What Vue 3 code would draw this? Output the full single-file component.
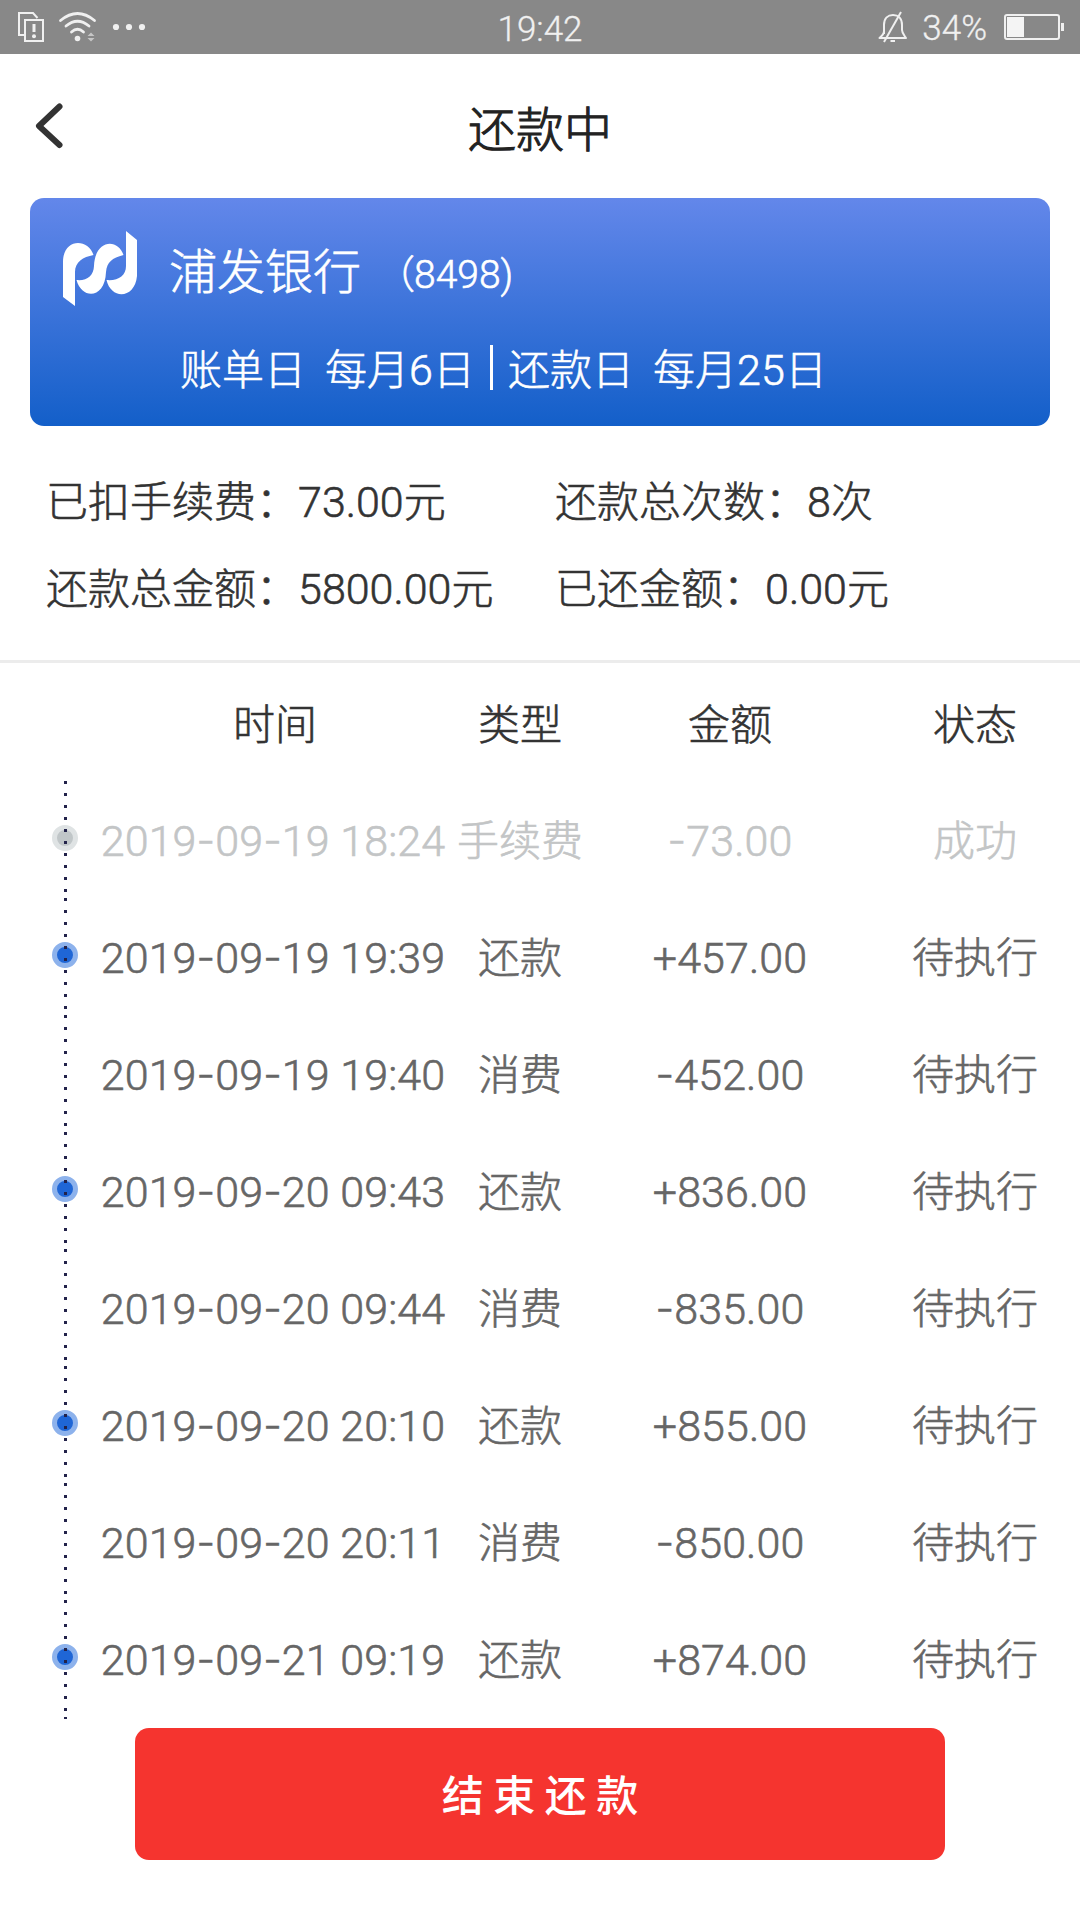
<template>
  <div class="page">
    <div class="status-bar">
      <svg class="status-left" width="160" height="54" viewBox="0 0 160 54" fill="none" stroke="#f0f0f0">
        <path d="M24 35H19V13H33L37.5 18" stroke-width="2" />
        <rect x="25" y="20" width="18" height="21" stroke-width="2" />
        <path d="M34 24V32" stroke-width="3" />
        <circle cx="34" cy="36.2" r="2" fill="#f0f0f0" stroke="none" />
        <g stroke-width="2.8" stroke-linecap="round">
          <path d="M60.5 20.5Q77.5 6.5 94.5 20.5" />
          <path d="M66 26Q77.5 16.5 89 26" />
          <path d="M71.5 32Q77.5 26.5 83.5 32" />
        </g>
        <g fill="#f0f0f0" stroke="none">
          <circle cx="77.5" cy="38.5" r="2.8" />
          <path d="M87.5 36L91 32.5L94.5 36ZM87.5 38L91 41.5L94.5 38Z" opacity="0.6" />
          <circle cx="116" cy="27" r="3.1" />
          <circle cx="129" cy="27" r="3.1" />
          <circle cx="142" cy="27" r="3.1" />
        </g>
      </svg>
      <div class="status-time">19:42</div>
      <div class="status-right">
        <svg width="32" height="34" viewBox="0 0 32 34" fill="none" stroke="#f0f0f0" stroke-width="2">
          <path d="M7 24V15C7 8 11 5 16 5C21 5 25 8 25 15V20C25 23 27 25 29 28H2.5C5 26 7 24 7 21" stroke-linejoin="round" />
          <path d="M24 2L7 32" />
          <path d="M13.5 31H18" />
        </svg>
        <span class="percent">34%</span>
        <svg width="62" height="28" viewBox="0 0 62 28">
          <rect x="2" y="2" width="54" height="24" rx="2" fill="none" stroke="#f0f0f0" stroke-width="2" />
          <rect x="4" y="4" width="17" height="20" fill="#f4f4f4" />
          <rect x="58" y="10" width="3" height="8" fill="#f0f0f0" />
        </svg>
      </div>
    </div>

    <div class="nav">
      <svg class="back" width="32" height="48" viewBox="0 0 32 48">
        <path d="M25.500 4.500L5 24L25.500 43" fill="none" stroke="#333" stroke-width="6" stroke-linecap="round" stroke-linejoin="round" />
      </svg>
      <div class="title">还款中</div>
    </div>

    <div class="bank-card">
      <div class="bank-head">
        <svg class="bank-logo" width="76" height="78" viewBox="62 230 76 78" fill="#fff">
          <path d="M63 262C63 238 88 238 93.500 255C83 257 75 262 75 272V306L63 297Z" />
          <path d="M76.500 280C87 281 93.500 276 94 266C95 239 118 238 123.500 255C112 258 107 262 106 272C105 299 82 300 76.500 280Z" />
          <path d="M106.500 280C118 281 126 276 126 266V231L137 240V276C135 299 111 300 106.500 280Z" />
        </svg>
        <span class="bank-name">{{ card.bank }}</span>
        <span class="bank-no">（<span class="tail">{{ card.tail }})</span></span>
      </div>
      <div class="bank-days">
        <span>账单日</span>
        <span>每月<span class="num">{{ card.billDay }}</span>日</span>
        <i class="bar"></i>
        <span>还款日</span>
        <span>每月<span class="num">{{ card.repayDay }}</span>日</span>
      </div>
    </div>

    <div class="summary">
      <div v-for="s in summary" :key="s.label">
        {{ s.label }}<span class="colon">：</span><span class="num">{{ s.value }}</span>{{ s.unit }}
      </div>
    </div>

    <div class="grid-row table-head">
      <div class="time">时间</div>
      <div>类型</div>
      <div>金额</div>
      <div class="state">状态</div>
    </div>

    <div class="list">
      <div v-for="r in records" :key="r.time" class="grid-row record" :class="{ done: r.done }">
        <i v-if="r.node" class="node"></i>
        <div class="num"><template v-for="(p, i) in r.time.split('-')" :key="i"><span v-if="i" class="dash">-</span>{{ p }}</template></div>
        <div>{{ r.type }}</div>
        <div class="num"><span v-if="r.amount < 0" class="dash">-</span><template v-else>+</template>{{ Math.abs(r.amount).toFixed(2) }}</div>
        <div class="state">{{ r.done ? '成功' : '待执行' }}</div>
      </div>
      <div class="list-rest"></div>
    </div>

    <button class="stop-btn">结 束 还 款</button>
  </div>
</template>

<script setup>
const card = { bank: '浦发银行', tail: '8498', billDay: 6, repayDay: 25 }

const summary = [
  { label: '已扣手续费', value: '73.00', unit: '元' },
  { label: '还款总次数', value: '8', unit: '次' },
  { label: '还款总金额', value: '5800.00', unit: '元' },
  { label: '已还金额', value: '0.00', unit: '元' }
]

// node: the row gets a marker on the timeline
const records = [
  { time: '2019-09-19 18:24', type: '手续费', amount: -73, node: true, done: true },
  { time: '2019-09-19 19:39', type: '还款', amount: 457, node: true },
  { time: '2019-09-19 19:40', type: '消费', amount: -452 },
  { time: '2019-09-20 09:43', type: '还款', amount: 836, node: true },
  { time: '2019-09-20 09:44', type: '消费', amount: -835 },
  { time: '2019-09-20 20:10', type: '还款', amount: 855, node: true },
  { time: '2019-09-20 20:11', type: '消费', amount: -850 },
  { time: '2019-09-21 09:19', type: '还款', amount: 874, node: true }
]
</script>

<style>
body {
  background: #fff;
}
</style>

<style scoped>
.page {
  width: 1080px;
  height: 1920px;
  overflow: hidden;
  background: #fff;
  color: #333;
  font-family: 'Noto Sans CJK SC', sans-serif;
  font-size: 42px;
  font-weight: 300;
  line-height: 60px;
  white-space: nowrap;
  -webkit-text-stroke: 0.6px currentColor;
}

.num,
.tail,
.percent,
.status-time {
  font-family: Roboto, 'Noto Sans CJK SC', sans-serif;
}

.num {
  font-size: 43px;
  letter-spacing: 0.1px;
}

.dash {
  font-family: Inter, sans-serif;
  font-size: 41px;
  line-height: 1;
  vertical-align: 1px;
}

.status-bar {
  display: grid;
  grid-template-columns: 1fr 160px 1fr;
  align-items: center;
  height: 54px;
  background: #888;
  color: #f0f0f0;
  -webkit-text-stroke-width: 0.3px;
}

.status-left {
  display: block;
}

.status-time {
  padding-top: 6px;
  text-align: center;
  font-size: 35px;
  line-height: 48px;
}

.status-right {
  display: flex;
  align-items: center;
  justify-content: flex-end;
  padding-right: 15px;
}

.percent {
  margin: 3px 16px 0 13px;
  font-size: 35px;
  line-height: 50px;
}

.nav {
  display: grid;
  grid-template-columns: 80px 1fr 80px;
  align-items: center;
  height: 144px;
}

.back {
  margin-left: 34px;
}

.title {
  color: #222;
  font-size: 48px;
  line-height: 62px;
  text-align: center;
  -webkit-text-stroke-width: 1px;
}

.bank-card {
  height: 228px;
  margin: 0 30px;
  border-radius: 14px;
  background: linear-gradient(#6387ea, #135fc9);
  color: #fff;
  overflow: hidden;
}

.bank-head {
  display: flex;
  align-items: center;
  height: 78px;
  margin: 32px 0 0 32px;
}

.bank-name {
  margin: -3px 0 0 31px;
  font-size: 48px;
}

.bank-no {
  margin-left: 15px;
  padding-top: 7px;
  font-size: 39px;
}

.tail {
  margin-left: -1px;
}

.bank-days {
  display: flex;
  align-items: center;
  gap: 19px;
  height: 60px;
  margin: 29px 0 0 150px;
}

.bank-days .num {
  font-size: 43px;
  line-height: 1;
}

.bar {
  width: 3px;
  height: 45px;
  margin: 0 -4px;
  background: #fff;
}

.summary {
  display: grid;
  grid-template-columns: 509px 1fr;
  grid-auto-rows: 87px;
  align-items: center;
  height: 237px;
  padding: 29px 0 0 46px;
  box-sizing: border-box;
  border-bottom: 3px solid #ececec;
}

.summary .num {
  line-height: 1;
  letter-spacing: 0;
}

.grid-row {
  display: grid;
  grid-template-columns: 346px 148px 272px 214px;
  align-items: center;
  padding-left: 100px;
  text-align: center;
}

.state {
  padding-left: 4px;
}

.table-head {
  height: 118px;
  padding-bottom: 1px;
  box-sizing: border-box;
}

.time {
  padding-left: 4px;
}

.record {
  position: relative;
  height: 117px;
  color: #666;
}

.record > div {
  margin-top: -3px;
}

.record > .num {
  margin-top: 3px;
}

.record.done {
  color: #c3c5c6;
}

/* the dotted rail restarts on every row */
.record::before,
.list-rest {
  width: 3px;
  background: repeating-linear-gradient(#22224a 0 3px, transparent 3px 12px);
}

.record::before {
  content: '';
  position: absolute;
  top: 0;
  bottom: 0;
  left: 64px;
  z-index: 1;
}

.list-rest {
  height: 2px;
  margin-left: 64px;
}

.node {
  position: absolute;
  left: 52px;
  top: 44px;
  width: 16px;
  height: 16px;
  border: 5px solid #8db2ec;
  border-radius: 50%;
  background: #1f66d6;
}

.done .node {
  border-color: #dfe3e4;
  background: #c0c6c8;
}

.stop-btn {
  display: block;
  width: 810px;
  height: 132px;
  margin: 9px auto 0;
  padding: 0 0 3px;
  border: 0;
  border-radius: 14px;
  background: #f5342f;
  color: #fff;
  font-family: inherit;
  font-size: 42px;
  font-weight: 500;
  -webkit-text-stroke-width: 0;
}
</style>
